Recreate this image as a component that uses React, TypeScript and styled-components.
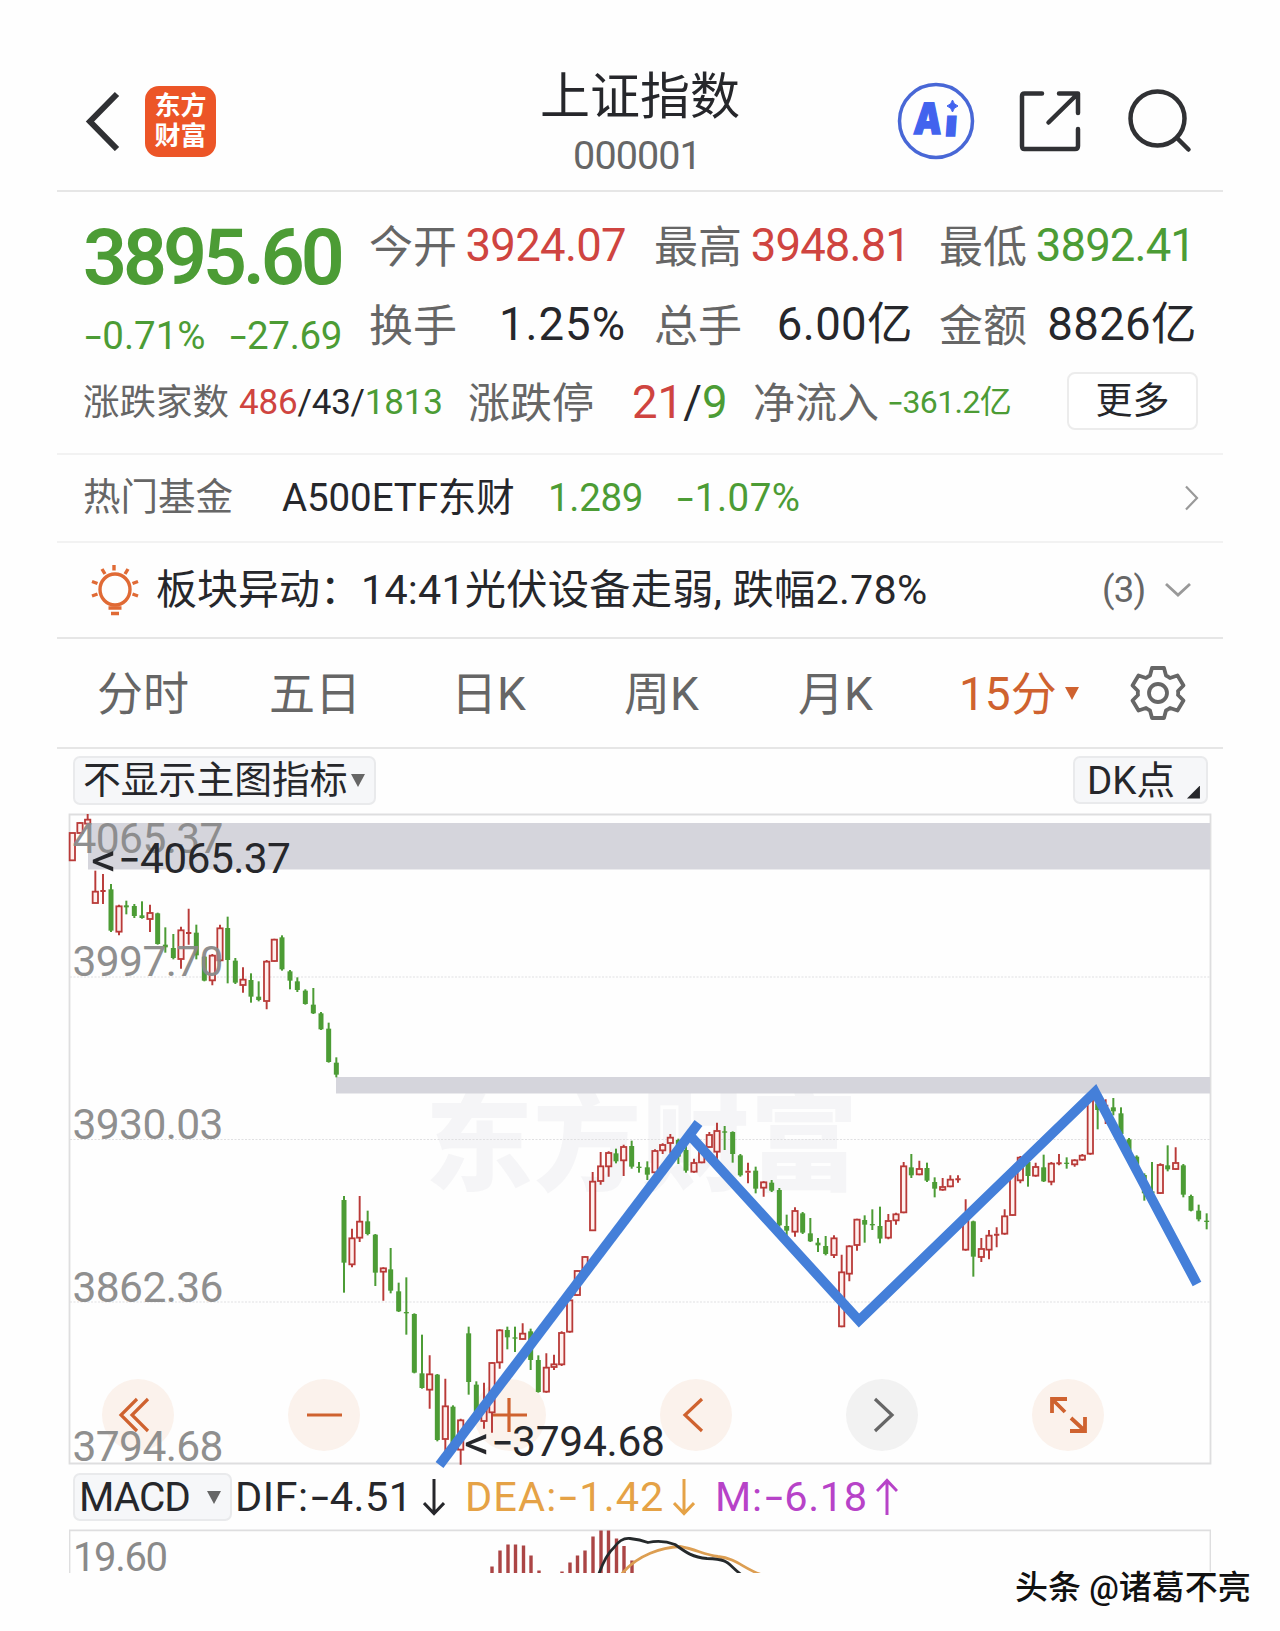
import React from 'react';
import styled, { createGlobalStyle } from 'styled-components';

const RED = '#cf4440';
const GREEN = '#4c9c35';
const INK = '#26272b';
const GRAY = '#666666';
const ORANGE = '#cf622f';
const FONT = `Roboto, 'Noto Sans CJK SC', sans-serif`;

const Global = createGlobalStyle`
  body { margin: 0; background: #fefefe; font-family: ${FONT}; color: ${INK}; }
  * { box-sizing: border-box; }
`;

const Page = styled.main`
  width: 1280px;
  height: 1631px;
  overflow: hidden;
  padding-left: 57px;
  padding-top: 50px;
`;

const Screen = styled.div`
  width: 1166px;
  display: flex;
  flex-direction: column;
`;

const Row = styled.div<{ $h: number; $line?: string; $pl?: number; $pt?: number; $pb?: number }>`
  height: ${p => p.$h}px;
  padding: ${p => p.$pt ?? 0}px 0 ${p => p.$pb ?? 0}px ${p => p.$pl ?? 0}px;
  display: flex;
  align-items: center;
  flex-shrink: 0;
  border-bottom: ${p => (p.$line ? `2px solid ${p.$line}` : 'none')};
`;

const Text = styled.span<{ $s: number; $c?: string; $w?: number; $ls?: number; $b?: number; $right?: boolean; $drop?: number }>`
  font-size: ${p => p.$s}px;
  line-height: 1;
  color: ${p => p.$c ?? INK};
  width: ${p => (p.$w ? `${p.$w}px` : 'auto')};
  letter-spacing: ${p => p.$ls ?? 0}px;
  font-weight: ${p => p.$b ?? 400};
  text-align: ${p => (p.$right ? 'right' : 'left')};
  padding-top: ${p => p.$drop ?? 0}px;
  white-space: pre;
  flex-shrink: 0;
`;

const Dash = styled.span`
  display: inline-block;
  font-family: Inter, sans-serif;
  transform: scaleX(1.15);
  transform-origin: 0 50%;
  line-height: 0.8;
  margin-right: 0.04em;
`;

const Tint = styled.span<{ $c: string }>`
  color: ${p => p.$c};
`;

/* Header */
const Header = styled(Row)`
  align-items: stretch;
`;
const HeaderSide = styled.div<{ $w: number }>`
  width: ${p => p.$w}px;
  display: flex;
  align-items: center;
  padding-top: 2px;
`;
const Title = styled.div`
  width: 268px;
  margin-right: -8px;
  display: flex;
  flex-direction: column;
  align-items: center;
  padding-top: 22px;
  gap: 14px;
`;
const Code = styled(Text)`
  margin-right: 6px;
`;
const Logo = styled.div`
  width: 71px;
  height: 71px;
  margin-left: 25px;
  border-radius: 14px;
  background: #ec5527;
  color: #fff;
  font: 700 26px/30px 'Noto Sans CJK SC', sans-serif;
  text-align: center;
  padding-top: 3px;
`;

/* Quote */
const Quote = styled.div`
  height: 170px;
  padding-left: 28px;
  display: flex;
`;
const PriceBox = styled.div`
  width: 283px;
  margin-left: -2px;
  margin-right: 3px;
`;
const Facts = styled.div`
  padding-top: 14px;
`;
const MoreButton = styled.button`
  width: 131px;
  height: 58px;
  padding: 0;
  margin-left: -1px;
  border: 2px solid #ececec;
  border-radius: 8px;
  background: #fff;
  color: ${INK};
  font: 400 37px/1 ${FONT};
  flex-shrink: 0;
`;

/* Pills above the charts */
const Pill = styled.button<{ $w: number; $h: number }>`
  width: ${p => p.$w}px;
  height: ${p => p.$h}px;
  padding: 0 0 0 8px;
  display: flex;
  align-items: center;
  flex-shrink: 0;
  border: 2px solid #e9eaec;
  border-radius: 7px;
  background: #f6f7f9;
  font-family: ${FONT};
`;
const SnugPill = styled(Pill)`
  padding-left: 4px;
`;
const Caret = styled.i<{ $c: string; $ml: number }>`
  margin-left: ${p => p.$ml}px;
  border: 7.5px solid transparent;
  border-top: 13px solid ${p => p.$c};
  border-bottom: 0;
  flex-shrink: 0;
`;
const Corner = styled.i`
  width: 13px;
  height: 13px;
  margin: 24px 0 0 12px;
  background: ${INK};
  clip-path: polygon(100% 0, 100% 100%, 0 100%);
`;

/* Chart */
const ChartBox = styled.div`
  position: relative;
  height: 662px;
  margin-left: 12px;
  flex-shrink: 0;
`;
const Controls = styled.div`
  position: absolute;
  left: 33px;
  top: 572px;
  display: flex;
  gap: 114.1px;
`;
const Round = styled.button<{ $muted?: boolean }>`
  width: 72px;
  height: 72px;
  padding: 0;
  border: 0;
  border-radius: 50%;
  background: ${p => (p.$muted ? '#f2f2f2' : '#fbf2ec')};
  svg { display: block; }
`;
const Canvas = styled.svg`
  position: relative;
  display: block;
  overflow: visible;
  pointer-events: none;
`;
const Macd = styled.div`
  height: 44px;
  margin-left: 12px;
  overflow: hidden;
`;
const ArrowIcon = styled.svg<{ $ml: number }>`
  margin-left: ${p => p.$ml}px;
  flex-shrink: 0;
`;
const BackIcon = styled.svg`
  margin-left: 27px;
`;
const ActionIcons = styled.svg`
  margin-left: 124px;
`;
const Credit = styled.div`
  width: 240px;
  margin: -5px 0 0 958px;
  font: 500 33px/40px ${FONT};
  color: #111;
  white-space: nowrap;
  text-shadow: -1px -1px 0 #fff, -2px -1px 0 #fff;
  position: relative;
`;
const Space = styled.div<{ $w: number }>`
  width: ${p => p.$w}px;
  flex-shrink: 0;
`;

type Candle = [up: 0 | 1, x: number, high: number, top: number, bottom: number, low: number];

/* Candles by stretch; each stretch has its own origin and uses thirds of a pixel. */
const stretches: { at: [number, number]; candles: Candle[] }[] = [
  {
    at: [60, 800],
    candles: [
      [1, 37, 98, 98, 182, 182], [1, 60, 66, 68, 100, 100], [1, 83, 42, 58, 72, 72],
      [1, 106, 212, 274, 310, 310], [1, 129, 222, 270, 276, 312], [0, 153, 252, 268, 392, 396],
      [1, 177, 314, 318, 396, 406], [0, 199, 302, 316, 322, 343], [0, 223, 312, 318, 348, 354],
      [0, 246, 304, 346, 354, 356], [1, 270, 314, 338, 358, 396], [0, 293, 338, 340, 432, 434],
      [0, 316, 382, 434, 442, 458], [0, 340, 402, 444, 474, 478], [1, 363, 380, 390, 478, 506],
      [1, 386, 326, 396, 402, 434], [0, 409, 374, 398, 466, 478], [0, 433, 468, 470, 542, 544],
      [1, 457, 462, 466, 542, 556], [1, 480, 374, 384, 482, 486], [0, 503, 350, 384, 480, 550],
      [0, 526, 474, 482, 548, 552], [1, 549, 502, 538, 556, 578], [0, 573, 520, 540, 590, 608],
      [0, 596, 544, 590, 600, 604], [1, 620, 480, 484, 604, 628], [1, 643, 416, 418, 484, 486],
      [0, 666, 406, 412, 508, 512], [0, 690, 510, 514, 542, 568], [0, 712, 532, 544, 570, 576],
      [0, 736, 568, 572, 612, 614], [0, 760, 564, 614, 640, 642], [0, 783, 636, 640, 688, 690],
      [0, 806, 668, 686, 786, 788], [0, 829, 772, 788, 824, 832],
    ],
  },
  {
    at: [320, 1060],
    candles: [
      [0, 72, 408, 420, 608, 698], [1, 96, 506, 534, 614, 622], [1, 119, 408, 484, 534, 546],
      [0, 143, 452, 484, 522, 526], [0, 166, 522, 524, 638, 678], [1, 190, 622, 624, 636, 722],
      [0, 212, 564, 628, 692, 700], [0, 236, 668, 694, 754, 756], [0, 259, 652, 756, 760, 824],
      [0, 283, 760, 762, 938, 940], [0, 306, 824, 940, 984, 986], [1, 329, 886, 942, 990, 1046],
      [0, 352, 942, 944, 1140, 1144], [1, 376, 956, 1038, 1138, 1180], [0, 399, 1036, 1040, 1150, 1160],
      [1, 422, 1076, 1080, 1170, 1214], [0, 446, 800, 820, 966, 1004], [0, 469, 964, 974, 1060, 1080],
      [1, 492, 968, 1040, 1084, 1106], [1, 516, 906, 908, 1058, 1118], [1, 539, 808, 810, 908, 926],
      [0, 562, 800, 810, 832, 868], [0, 585, 800, 832, 836, 876], [1, 608, 790, 820, 838, 840],
      [0, 632, 806, 814, 900, 930], [0, 655, 886, 900, 996, 998], [1, 679, 880, 922, 996, 998],
      [1, 702, 884, 912, 922, 930], [1, 725, 814, 818, 914, 918], [1, 749, 700, 720, 816, 818],
      [1, 772, 630, 632, 706, 708], [1, 795, 588, 590, 640, 660], [1, 818, 336, 364, 512, 512],
      [1, 842, 276, 318, 364, 374], [1, 866, 274, 278, 320, 350], [0, 888, 266, 280, 304, 310],
    ],
  },
  {
    at: [580, 1080],
    candles: [
      [1, 131, 194, 200, 242, 288], [0, 155, 182, 198, 260, 266], [0, 177, 246, 260, 264, 278],
      [0, 202, 244, 262, 284, 300], [1, 225, 208, 212, 278, 280], [1, 248, 190, 194, 212, 222],
      [1, 271, 162, 172, 190, 220], [0, 295, 176, 180, 230, 252], [0, 318, 196, 210, 272, 278],
      [1, 342, 236, 248, 276, 278], [1, 365, 200, 210, 248, 250], [1, 388, 156, 164, 202, 204],
      [1, 411, 128, 152, 216, 240], [0, 434, 138, 154, 158, 210], [0, 458, 154, 156, 222, 248],
      [0, 481, 222, 226, 286, 290], [1, 504, 248, 272, 278, 310], [0, 527, 260, 272, 326, 340],
      [1, 551, 304, 306, 324, 350], [0, 575, 300, 308, 332, 336], [0, 598, 324, 330, 436, 440],
      [0, 620, 404, 438, 452, 470], [1, 645, 382, 392, 456, 470], [0, 668, 396, 400, 458, 462],
      [0, 691, 414, 460, 484, 486], [0, 714, 474, 488, 496, 516], [0, 737, 468, 498, 522, 526],
      [1, 762, 466, 474, 526, 534], [1, 785, 524, 576, 740, 742], [1, 808, 496, 498, 582, 604],
      [1, 831, 416, 418, 496, 512], [0, 854, 406, 420, 434, 488], [0, 877, 388, 432, 436, 450],
      [0, 900, 380, 438, 476, 490], [1, 925, 402, 422, 474, 478], [1, 948, 398, 402, 422, 434],
    ],
  },
  {
    at: [880, 1060],
    candles: [
      [1, 71, 306, 318, 458, 460], [0, 94, 282, 322, 346, 354], [1, 118, 302, 326, 344, 346],
      [0, 141, 308, 324, 362, 366], [0, 164, 352, 366, 386, 412], [1, 188, 354, 380, 390, 392],
      [1, 211, 346, 358, 380, 382], [1, 234, 346, 356, 360, 368], [1, 257, 418, 480, 570, 572],
      [0, 280, 482, 484, 590, 650], [1, 304, 534, 566, 592, 606], [1, 327, 510, 526, 570, 598],
      [1, 350, 502, 520, 528, 562], [1, 374, 448, 468, 522, 524], [1, 398, 326, 328, 466, 468],
      [1, 421, 288, 292, 362, 370], [0, 444, 300, 306, 348, 380], [1, 467, 308, 320, 348, 350],
      [0, 491, 284, 322, 364, 366], [1, 514, 306, 310, 366, 376], [1, 537, 282, 308, 312, 316],
      [0, 560, 292, 308, 312, 326], [1, 584, 298, 300, 314, 320], [1, 607, 282, 286, 300, 302],
      [1, 631, 110, 120, 282, 284], [0, 653, 120, 130, 150, 208], [1, 677, 118, 134, 140, 192],
      [0, 700, 114, 142, 154, 166], [0, 723, 142, 160, 222, 240], [0, 747, 234, 238, 290, 300],
      [0, 770, 286, 290, 330, 345], [0, 793, 340, 345, 400, 422], [0, 816, 306, 394, 400, 402],
      [1, 841, 310, 314, 400, 402], [0, 863, 256, 316, 328, 334], [1, 887, 262, 308, 328, 330],
      [0, 910, 312, 316, 404, 412], [0, 933, 404, 408, 452, 454], [0, 956, 434, 452, 478, 484],
      [0, 980, 460, 482, 486, 508],
    ],
  },
];

const CandleMark = ({ c: [up, x, high, top, bottom, low] }: { c: Candle }) => {
  if (!up) {
    return (
      <g fill={GREEN}>
        <rect x={x - 3} y={high} width={6} height={low - high} />
        <rect x={x - 7.5} y={top} width={15} height={bottom - top} />
      </g>
    );
  }
  const flat = bottom - top < 9;
  return (
    <g stroke="#b93a38" fill="none" strokeWidth={5.8}>
      <path d={`M${x} ${high}V${top}M${x} ${bottom}V${low}`} />
      {flat ? (
        <path d={`M${x - 8} ${(top + bottom) / 2}H${x + 8}M${x} ${top}V${bottom}`} />
      ) : (
        <rect x={x - 8} y={top + 1} width={16} height={bottom - top - 2} fill="#fff0ee" strokeWidth={5.4} />
      )}
    </g>
  );
};

const axis: [string, number][] = [
  ['4065.37', 853],
  ['3997.70', 976],
  ['3930.03', 1138.5],
  ['3862.36', 1301.5],
  ['3794.68', 1460.5],
];

const bars: [number, number][] = [
  [492, 1567], [500, 1551], [508, 1545], [515.5, 1545], [523.5, 1546], [531, 1556], [539, 1571],
  [562, 1572], [570, 1563], [577.5, 1556], [585, 1551], [593, 1537], [601, 1531], [608.5, 1531],
  [616.5, 1539], [624, 1546.5], [632, 1561],
];

const PriceChart = () => (
  <Canvas width="1142" height="662" viewBox="69 807 1142 662" fontFamily={FONT}>
    <text x="425" y="1182" fontFamily="'Noto Sans CJK SC'" fontWeight="900" fontSize="108" textLength="433" fill="#f3f3f5" opacity="0.75">东方财富</text>
    <g stroke="#e0e0e2" strokeWidth="1.2" strokeDasharray="2 1.5">
      <path d="M70 977H1210M70 1139.5H1210M70 1302H1210" />
    </g>
    <path d="M69.5 814.5H1210.5V1463.5H69.5Z" fill="none" stroke="#dededf" strokeWidth="1.8" />
    <rect x="88" y="823" width="1122" height="46.5" fill="#d5d5dc" />
    <rect x="336" y="1077" width="874" height="16.5" fill="#d5d5dc" />
    {stretches.map(s => (
      <g key={s.at[0]} transform={`translate(${s.at[0]} ${s.at[1]}) scale(0.33333)`}>
        {s.candles.map(c => <CandleMark key={c[1]} c={c} />)}
      </g>
    ))}
    <g fill="#8a8a8a" opacity="0.95" fontSize="42.5">
      {axis.map(([label, y]) => (
        <text key={label} x="72.5" y={y} textLength="151" lengthAdjust="spacing">{label}</text>
      ))}
    </g>
    <g fill="none" stroke="#447fd9" strokeWidth="9.8">
      <path d="M439.5 1465L698.5 1123" />
      <path d="M689.5 1135L859 1320.5L1095 1092L1197 1284" />
    </g>
    <g fill={INK} fontSize="42.5">
      <text x="91" y="876" fontSize="47" textLength="26" lengthAdjust="spacingAndGlyphs">&lt;</text>
      <text x="118" y="873" fontFamily="Inter" textLength="23" lengthAdjust="spacingAndGlyphs">-</text>
      <text x="140" y="873" textLength="151">4065.37</text>
      <text x="464" y="1459" fontSize="47" textLength="26" lengthAdjust="spacingAndGlyphs">&lt;</text>
      <text x="491" y="1456" fontFamily="Inter" textLength="23" lengthAdjust="spacingAndGlyphs">-</text>
      <text x="512" y="1456" textLength="153">3794.68</text>
    </g>
  </Canvas>
);

const Arrow = ({ up, color, ml }: { up?: boolean; color: string; ml: number }) => (
  <ArrowIcon $ml={ml} width="22" height="38" viewBox="0 0 22 38" fill="none" stroke={color} strokeWidth="3">
    <path d={up ? 'M11 37V3M1 13L11 2.500L21 13' : 'M11 1V35M1 25L11 35.500L21 25'} />
  </ArrowIcon>
);

const Fact = ({ label, children, gap, vw, color, ls, drop = 2 }: { label: string; children: React.ReactNode; gap?: number; vw: number; color?: string; ls?: number; drop?: number }) => (
  <>
    <Text $s={44} $c={GRAY} $w={88} $drop={drop + 3}>{label}</Text>
    <Text $s={45.5} $c={color} $w={vw - 1} $ls={ls} $drop={drop} $right>{children}</Text>
    {gap ? <Space $w={gap} /> : null}
  </>
);

const tabs: [string, number][] = [['分时', 172], ['五日', 182], ['日K', 173], ['周K', 174], ['月K', 161]];

export default function App() {
  return (
    <Page>
      <Global />
      <Screen>
        <Header $h={142} $line="#e6e6e6">
          <HeaderSide $w={449}>
            <BackIcon width="36" height="60" viewBox="0 0 36 60" fill="none" stroke="#303134" strokeWidth="6">
              <path d="M33 3L6 30.500L33 58" />
            </BackIcon>
            <Logo>东方<br />财富</Logo>
          </HeaderSide>
          <Title>
            <Text $s={50}>上证指数</Text>
            <Code $s={39.500} $c={GRAY} $ls={-0.900}>000001</Code>
          </Title>
          <HeaderSide $w={440}>
            <ActionIcons width="310" height="90" viewBox="890 76 310 90" fill="none">
              <circle cx="936" cy="121" r="36.500" stroke="#4867d6" strokeWidth="3.500" />
              <g fill="#4263ee" stroke="#4263ee" strokeWidth="1.500" fontFamily="Inter" fontWeight="900" transform="translate(913 134) skewX(-4)">
                <text x="0" y="0" fontSize="43" textLength="28" lengthAdjust="spacingAndGlyphs">A</text>
                <text x="31.500" y="1.500" fontSize="36" textLength="12" lengthAdjust="spacingAndGlyphs">ı</text>
              </g>
              <path d="M952.500 100Q953.500 104.500 958 106Q953.500 107.500 952.500 112Q951.500 107.500 947 106Q951.500 104.500 952.500 100Z" fill="#4263ee" stroke="#4263ee" />
              <g stroke="#303134" strokeWidth="4.500" strokeLinecap="round" strokeLinejoin="round">
                <path d="M1042 93.500H1024.500Q1022 93.500 1022 96V146Q1022 149 1024.500 149H1075Q1078 149 1078 146V129M1059 93.500H1078V113M1077 94.500L1048.500 122.500" />
                <circle cx="1157.500" cy="118.500" r="27" />
                <path d="M1177.500 138.500L1188.500 149.500" />
              </g>
            </ActionIcons>
          </HeaderSide>
        </Header>

        <Quote>
          <PriceBox>
            <Row $h={130}><Text $s={77} $c={GREEN} $b={600} $ls={-4} $drop={2}>3895.60</Text></Row>
            <Row $h={26}>
              <Text $s={38.500} $c={GREEN} $w={145} $drop={2}><Dash>-</Dash>0.71%</Text>
              <Text $s={38.500} $c={GREEN} $ls={-0.3} $drop={2}><Dash>-</Dash>27.69</Text>
            </Row>
          </PriceBox>
          <Facts>
            <Row $h={78}>
              <Fact label="今开" vw={170} gap={28} color={RED} ls={-0.7}>3924.07</Fact>
              <Fact label="最高" vw={169} gap={29} color={RED} ls={-0.9}>3948.81</Fact>
              <Fact label="最低" vw={169} color={GREEN} ls={-0.9}>3892.41</Fact>
            </Row>
            <Row $h={78}>
              <Fact label="换手" vw={170} gap={28} ls={1} drop={4}>1.25%</Fact>
              <Fact label="总手" vw={172} gap={26} ls={0.4} drop={4}>6.00亿</Fact>
              <Fact label="金额" vw={171} ls={0.4} drop={4}>8826亿</Fact>
            </Row>
          </Facts>
        </Quote>
        <Row $h={78} $pl={26}>
          <Text $s={36.500} $c={GRAY} $w={156} $drop={4}>涨跌家数</Text>
          <Text $s={35} $w={229} $ls={-0.2} $drop={2}><Tint $c={RED}>486</Tint>/43/<Tint $c={GREEN}>1813</Tint></Text>
          <Text $s={42} $c={GRAY} $w={164} $drop={6}>涨跌停</Text>
          <Text $s={45.500} $w={121} $drop={4}><Tint $c={RED}>21</Tint>/<Tint $c={GREEN}>9</Tint></Text>
          <Text $s={42} $c={GRAY} $w={134} $drop={6}>净流入</Text>
          <Text $s={32} $c={GREEN} $w={181} $ls={-0.6} $drop={2}><Dash>-</Dash>361.2亿</Text>
          <MoreButton>更多</MoreButton>
        </Row>
        <Row $h={15} $line="#f2f2f2" />

        <Row $h={88} $line="#f2f2f2" $pl={26}>
          <Text $s={37.500} $c={GRAY} $w={199}>热门基金</Text>
          <Text $s={38.500} $w={266} $ls={-0.1}>A500ETF东财</Text>
          <Text $s={38.500} $c={GREEN} $w={127} $ls={-0.3}>1.289</Text>
          <Text $s={38.500} $c={GREEN} $w={509} $ls={0.500}><Dash>-</Dash>1.07%</Text>
          <svg width="16" height="26" viewBox="0 0 16 26" fill="none" stroke="#999" strokeWidth="2.200"><path d="M2 1.500L13 13L2 24.500" /></svg>
        </Row>

        <Row $h={96} $line="#e6e6e6" $pl={34}>
          <svg width="48" height="52" viewBox="0 0 48 52" fill="none" stroke="#e06a35" strokeWidth="3.400">
            <ellipse cx="24" cy="25.500" rx="15" ry="15.500" />
            <path d="M17.500 44H30.500M20 49.500H28M23 1V6.500M11 5L14 10M37 5L34 10M1 17.500L6.500 19.500M47 17.500L41.500 19.500M1 32L6.500 30M47 32L41.500 30" />
          </svg>
          <Space $w={17} />
          <Text $s={41} $w={205} $drop={1}>板块异动：</Text>
          <Text $s={41.300} $w={741} $ls={0.200} $drop={1}>14:41光伏设备走弱, 跌幅2.78%</Text>
          <Text $s={36.500} $c={GRAY} $w={62} $ls={-0.700}>(3)</Text>
          <svg width="28" height="18" viewBox="0 0 28 18" fill="none" stroke="#999" strokeWidth="2.800"><path d="M2 3L14 14L26 3" /></svg>
        </Row>

        <Row $h={110} $line="#e6e6e6" $pl={40}>
          {tabs.map(([name, w]) => <Text key={name} $s={46} $c={GRAY} $w={w} $drop={2}>{name}</Text>)}
          <Text $s={46} $c={ORANGE} $w={98} $drop={2}>15分</Text>
          <Caret $c={ORANGE} $ml={8} />
          <Space $w={51} />
          <svg width="56" height="56" viewBox="-28 -28 56 56" fill="none" stroke={GRAY} strokeWidth="3.800" strokeLinejoin="round">
            <path d="M-6 -25H6L8 -17.500Q10 -16.500 12 -15L19.500 -17.500L25.500 -7.500L20 -2Q20.400 0 20 2L25.500 7.500L19.500 17.500L12 15Q10 16.500 8 17.500L6 25H-6L-8 17.500Q-10 16.500 -12 15L-19.500 17.500L-25.500 7.500L-20 2Q-20.400 0 -20 -2L-25.500 -7.500L-19.500 -17.500L-12 -15Q-10 -16.500 -8 -17.500Z" />
            <circle r="9" />
          </svg>
        </Row>

        <Row $h={58} $pl={16} $pt={4}>
          <Pill $w={303} $h={49}>
            <Text $s={37.800} $drop={2}>不显示主图指标</Text>
            <Caret $c={GRAY} $ml={3} />
          </Pill>
          <Space $w={697} />
          <Pill $w={135} $h={48}>
            <Space $w={4} />
            <Text $s={38.500} $drop={2}>DK点</Text>
            <Corner />
          </Pill>
        </Row>

        <ChartBox>
          <Controls>
            <Round><svg width="72" height="72" fill="none" stroke={ORANGE} strokeWidth="3.200"><path d="M35 20L19 36L35 52M46 20L30 36L46 52" /></svg></Round>
            <Round><svg width="72" height="72" stroke={ORANGE} strokeWidth="3.200"><path d="M19 36H54" /></svg></Round>
            <Round><svg width="72" height="72" stroke={ORANGE} strokeWidth="3.200"><path d="M18 36H53M35 19V53" /></svg></Round>
            <Round><svg width="72" height="72" fill="none" stroke={ORANGE} strokeWidth="3.200"><path d="M42 20L25 36L42 52" /></svg></Round>
            <Round $muted><svg width="72" height="72" fill="none" stroke={GRAY} strokeWidth="3.200"><path d="M29 20L46 36L29 52" /></svg></Round>
            <Round><svg width="72" height="72" fill="none" stroke={ORANGE} strokeWidth="3.800"><path d="M35 20H20V34M20 20L33 33M53 38V52H38M53 52L39 39" /></svg></Round>
          </Controls>
          <PriceChart />
        </ChartBox>

        <Row $h={60} $pl={16} $pb={4}>
          <SnugPill $w={159} $h={48}>
            <Text $s={40.500} $w={123} $ls={-1}>MACD</Text>
            <Caret $c={GRAY} $ml={5} />
          </SnugPill>
          <Space $w={3} />
          <Text $s={41.500} $w={176} $ls={0.500}>DIF:<Dash>-</Dash>4.51</Text>
          <Arrow color={INK} ml={12} />
          <Space $w={20} />
          <Text $s={41.500} $c="#e5a246" $w={200} $ls={1.100}>DEA:<Dash>-</Dash>1.42</Text>
          <Arrow color="#e5a246" ml={8} />
          <Space $w={20} />
          <Text $s={41.500} $c="#b743c8" $w={154} $ls={0.700}>M:<Dash>-</Dash>6.18</Text>
          <Arrow up color="#b743c8" ml={7} />
        </Row>

        <Macd>
          <svg width="1142" height="44" viewBox="69 1529.500 1142 44" fontFamily={FONT}>
            <path d="M69.500 1580V1530.800H1210.500V1580" fill="none" stroke="#dededf" strokeWidth="1.800" />
            <text x="73" y="1571" fontSize="40" textLength="95" fill="#8a8a8a">19.60</text>
            {bars.map(([x, y]) => <rect key={x} x={x - 1.700} y={y} width="3.400" height={1580 - y} fill="#ab4545" />)}
            <path d="M622 1574C638 1555 662 1548 680 1547C697 1550 703 1555 718 1557C737 1559 743 1569 761 1575" fill="none" stroke="#dc9e52" strokeWidth="2.800" />
            <path d="M599 1574Q606 1555 614 1548Q621 1538 630 1539Q640 1540 648 1543Q662 1540 675 1545C686 1553 693 1558 707 1559C730 1560 726 1563 741 1575" fill="none" stroke="#25292b" strokeWidth="2.800" />
          </svg>
        </Macd>
        <Credit>头条 @诸葛不亮</Credit>
      </Screen>
    </Page>
  );
}
